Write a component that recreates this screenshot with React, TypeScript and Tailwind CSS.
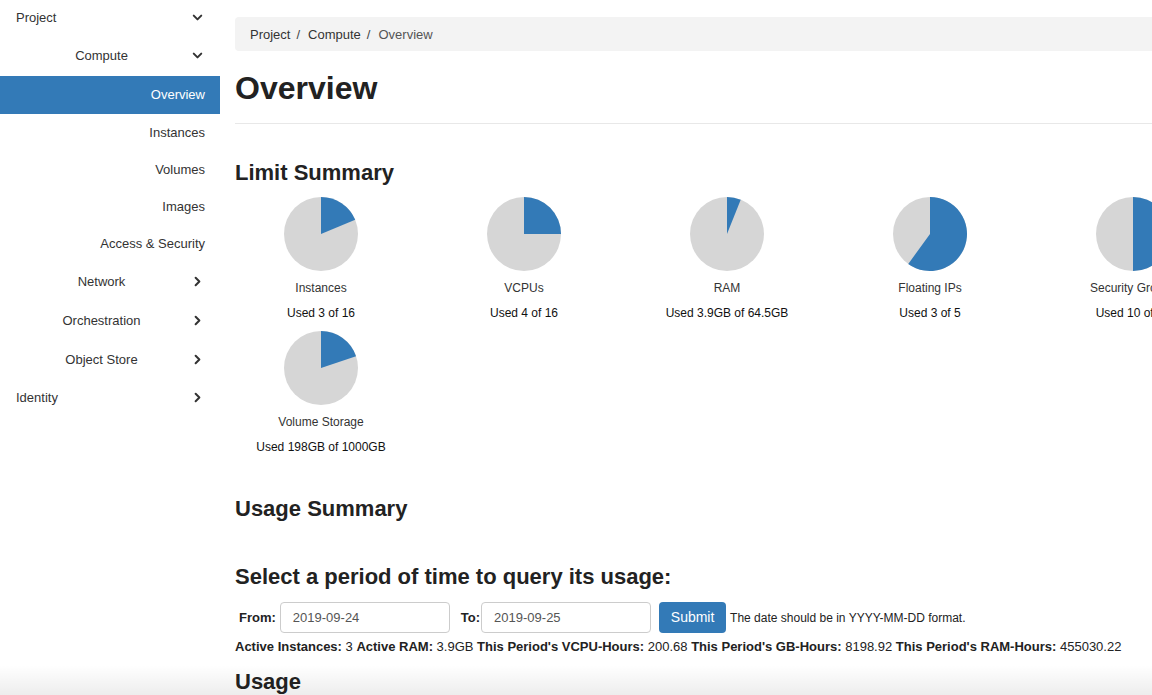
import React from "react";
import { ChevronDown, ChevronRight } from "lucide-react";

const font = { fontFamily: '"Liberation Sans", Arial, Helvetica, sans-serif' };

function Pie({ frac }: { frac: number }) {
  const r = 37;
  const a = frac * 2 * Math.PI;
  const x = r + r * Math.sin(a);
  const y = r - r * Math.cos(a);
  const large = frac > 0.5 ? 1 : 0;
  return (
    <svg width="74" height="74" viewBox="0 0 74 74">
      <circle cx="37" cy="37" r="37" fill="#d6d6d6" />
      <path d={`M37,37 L37,0 A37,37 0 ${large} 1 ${x},${y} Z`} fill="#337ab7" />
    </svg>
  );
}

const charts = [
  { label: "Instances", used: "Used 3 of 16", frac: 3 / 16 },
  { label: "VCPUs", used: "Used 4 of 16", frac: 4 / 16 },
  { label: "RAM", used: "Used 3.9GB of 64.5GB", frac: 3.9 / 64.5 },
  { label: "Floating IPs", used: "Used 3 of 5", frac: 3 / 5 },
  { label: "Security Groups", used: "Used 10 of 20", frac: 0.5 },
  { label: "Volume Storage", used: "Used 198GB of 1000GB", frac: 198 / 1000 },
];

function GroupRow({ label, open, h, center }: { label: string; open?: boolean; h: string; center?: boolean }) {
  return (
    <div className={`flex items-center pl-4 pr-[15px] ${h}`}>
      <div className={`flex-1 text-[13px] text-[#333] ${center ? "text-center pr-[3px]" : ""}`}>{label}</div>
      {open ? (
        <ChevronDown size={15} strokeWidth={3.2} className="text-[#333]" />
      ) : (
        <ChevronRight size={15} strokeWidth={3.2} className="text-[#333]" />
      )}
    </div>
  );
}

function Item({ label, h, active }: { label: string; h: string; active?: boolean }) {
  return (
    <div
      className={`flex items-center justify-end pr-[15px] text-[13px] ${h} ${
        active ? "bg-[#337ab7] text-white" : "text-[#333]"
      }`}
    >
      {label}
    </div>
  );
}

export default function App() {
  return (
    <div className="relative w-[1152px] h-[695px] overflow-hidden bg-white" style={font}>
      <div className="flex w-[1500px]">
        <div className="w-[220px] shrink-0">
          <GroupRow label="Project" open h="h-[35px]" />
          <GroupRow label="Compute" open h="h-[41px]" center />
          <Item label="Overview" h="h-[38px]" active />
          <Item label="Instances" h="h-[37px]" />
          <Item label="Volumes" h="h-[37px]" />
          <Item label="Images" h="h-[37px]" />
          <Item label="Access & Security" h="h-[37px]" />
          <GroupRow label="Network" h="h-[39px]" center />
          <GroupRow label="Orchestration" h="h-[39px]" center />
          <GroupRow label="Object Store" h="h-[39px]" center />
          <GroupRow label="Identity" h="h-[37px]" />
        </div>
        <div className="ml-[15px] w-[1100px] pt-[17px] text-[#333]">
          <div className="h-[34px] rounded-l-[4px] bg-[#f3f3f3] flex items-center pl-[15px] pt-[2px] text-[13px]">
            <span className="text-[#333]">Project</span>
            <span className="px-[6px] text-[#444]">/</span>
            <span className="pl-[2px] text-[#333]">Compute</span>
            <span className="px-[6px] text-[#444]">/</span>
            <span className="pl-[2px] text-[#555]">Overview</span>
          </div>
          <h1 className="mt-[20px] text-[32px] leading-[35px] font-bold text-[#222]">Overview</h1>
          <div className="mt-[17px] h-px bg-[#e8e8e8]" />
          <h2 className="mt-[37px] text-[22px] leading-[24px] font-bold text-[#222]">Limit Summary</h2>
          <div className="mt-[12px] flex flex-wrap gap-x-[31px] gap-y-[10px]">
            {charts.map((c) => (
              <div key={c.label} className="w-[172px] flex flex-col items-center">
                <Pie frac={c.frac} />
                <div className="mt-[9px] text-[12px] leading-[16px] text-[#333] whitespace-nowrap">{c.label}</div>
                <div className="mt-[9px] text-[12px] leading-[16px] text-[#111] whitespace-nowrap">{c.used}</div>
              </div>
            ))}
          </div>
          <h2 className="mt-[42px] text-[22px] leading-[24px] font-bold text-[#222]">Usage Summary</h2>
          <h2 className="mt-[44px] text-[22px] leading-[24px] font-bold text-[#222]">
            Select a period of time to query its usage:
          </h2>
          <div className="mt-[13px] flex items-center h-[31px]">
            <span className="ml-[4px] text-[13px] font-bold text-[#222]">From:</span>
            <div className="ml-[4px] w-[170px] h-[31px] border border-[#ccc] rounded-[4px] flex items-center pl-[12px] text-[13px] text-[#555]">
              2019-09-24
            </div>
            <span className="ml-[11px] text-[13px] font-bold text-[#222]">To:</span>
            <div className="ml-[1px] w-[170px] h-[31px] border border-[#ccc] rounded-[4px] flex items-center pl-[12px] text-[13px] text-[#555]">
              2019-09-25
            </div>
            <div className="ml-[8px] w-[67px] h-[31px] rounded-[4px] bg-[#337ab7] text-white text-[14px] flex items-center justify-center">
              Submit
            </div>
            <span className="ml-[4px] text-[12px] text-[#222]">The date should be in YYYY-MM-DD format.</span>
          </div>
          <div className="mt-[6px] text-[13px] leading-[16px] text-[#222] whitespace-nowrap">
            <b>Active Instances:</b> 3 <b>Active RAM:</b> 3.9GB <b>This Period's VCPU-Hours:</b> 200.68{" "}
            <b>This Period's GB-Hours:</b> 8198.92 <b>This Period's RAM-Hours:</b> 455030.22
          </div>
          <h2 className="mt-[15px] text-[22px] leading-[24px] font-bold text-[#222]">Usage</h2>
        </div>
      </div>
      <div className="pointer-events-none absolute left-0 right-0 bottom-0 h-[30px] bg-gradient-to-b from-transparent to-black/[0.07]" />
    </div>
  );
}
